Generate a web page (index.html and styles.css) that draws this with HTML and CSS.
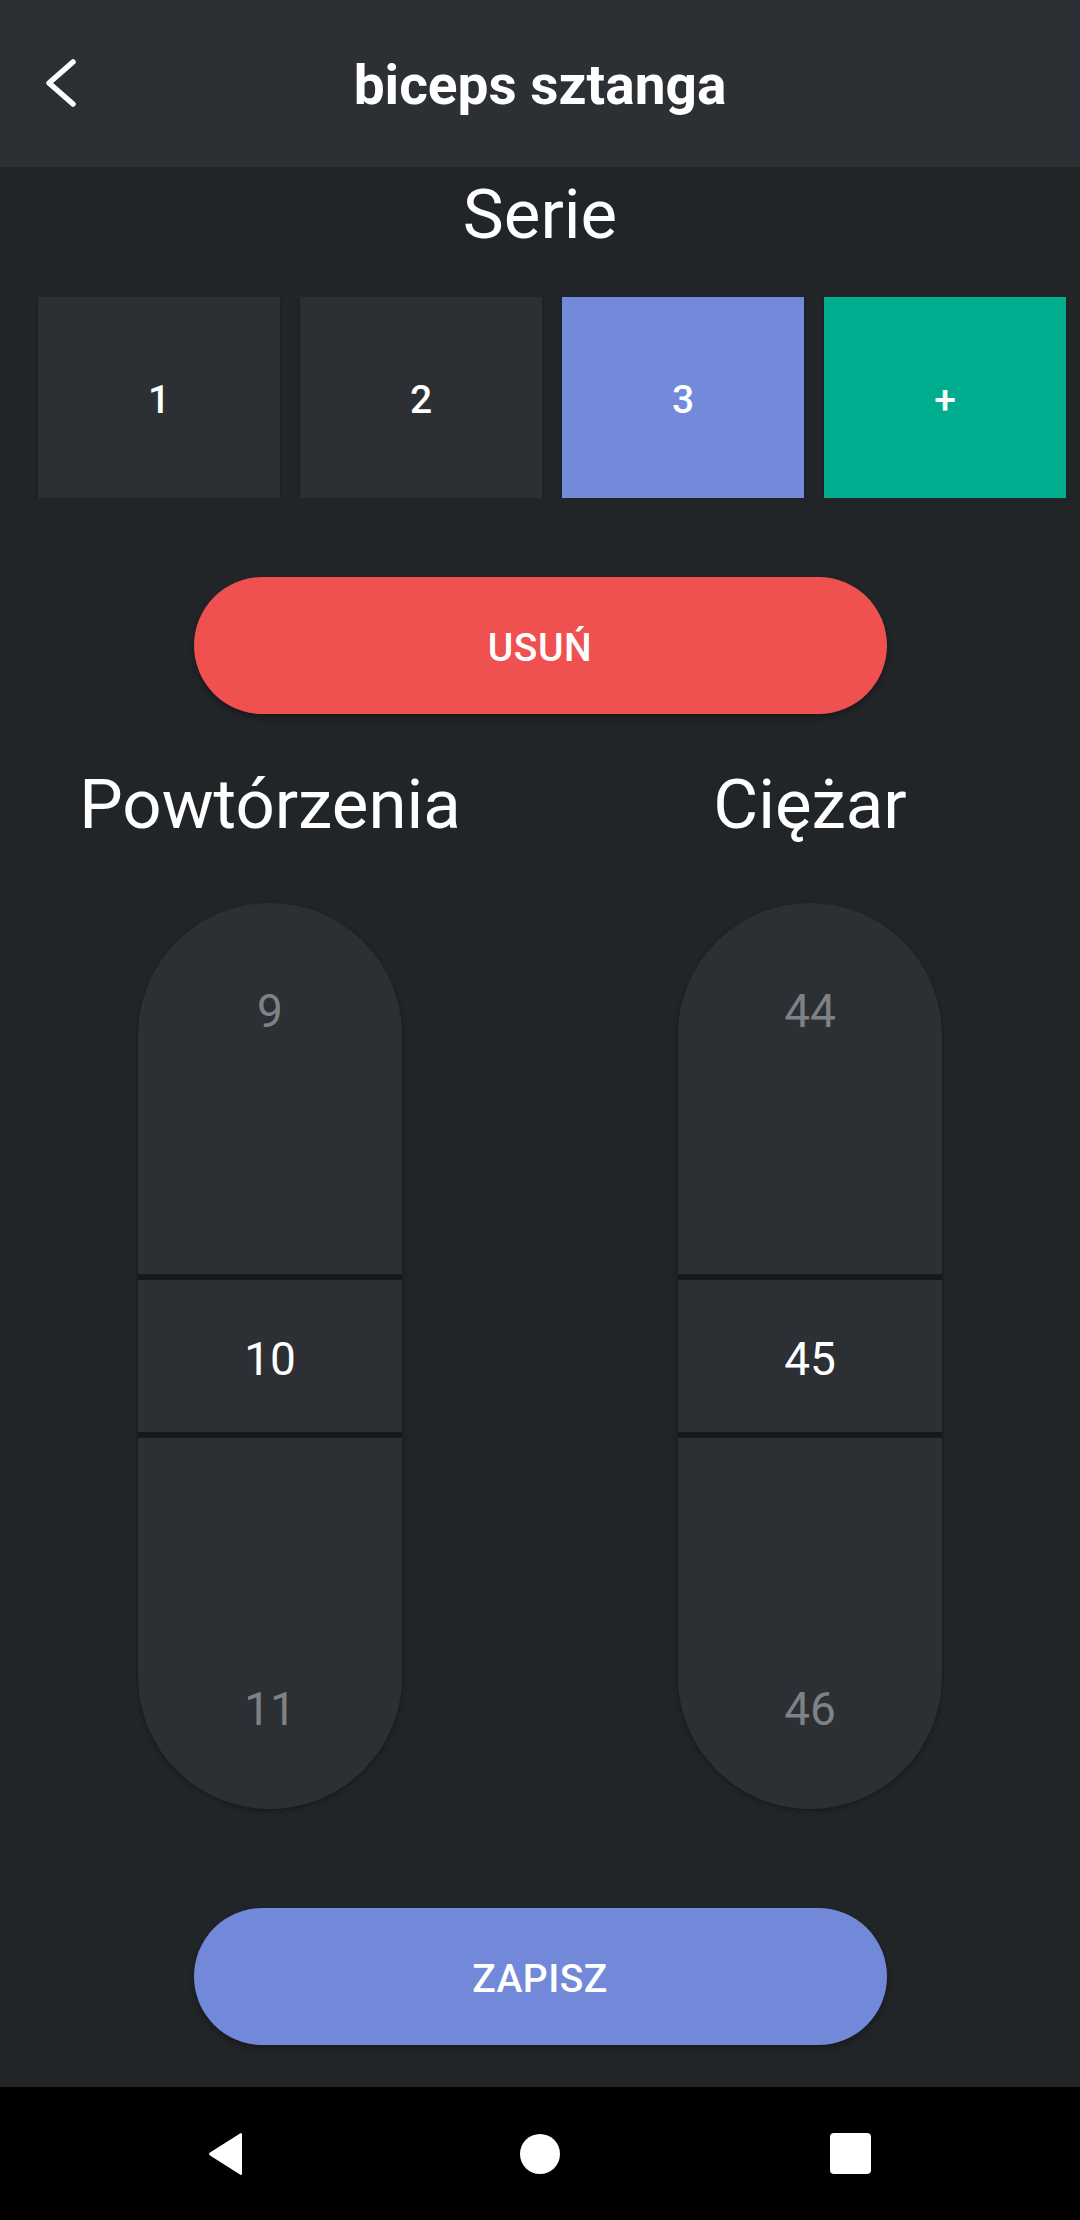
FILE: index.html
```html
<!DOCTYPE html>
<html lang="pl">
<head>
<meta charset="utf-8">
<title>biceps sztanga</title>
<link rel="stylesheet" href="styles.css">
</head>
<body>
<div class="screen">
  <header class="appbar">
    <div class="appbar-left">
      <svg class="back-icon" width="40" height="56" viewBox="0 0 40 56">
        <polyline points="28,5 4,26 28,47" fill="none" stroke="#ffffff" stroke-width="5.5" stroke-linecap="round" stroke-linejoin="round"/>
      </svg>
    </div>
    <h1 class="appbar-title">biceps sztanga</h1>
    <div class="appbar-right"></div>
  </header>

  <main class="content">
    <h2 class="section-title">Serie</h2>

    <div class="series-row">
      <div class="series-tile">1</div>
      <div class="series-tile">2</div>
      <div class="series-tile series-tile--active">3</div>
      <div class="series-tile series-tile--add">+</div>
    </div>

    <button class="pill-btn pill-btn--danger">USUŃ</button>

    <div class="pickers">
      <div class="picker-col">
        <h2 class="picker-label">Powtórzenia</h2>
        <div class="picker">
          <div class="picker-top"><span class="picker-dim">9</span></div>
          <div class="picker-divider"></div>
          <div class="picker-mid">10</div>
          <div class="picker-divider"></div>
          <div class="picker-bottom"><span class="picker-dim">11</span></div>
        </div>
      </div>
      <div class="picker-col">
        <h2 class="picker-label">Ciężar</h2>
        <div class="picker">
          <div class="picker-top"><span class="picker-dim">44</span></div>
          <div class="picker-divider"></div>
          <div class="picker-mid">45</div>
          <div class="picker-divider"></div>
          <div class="picker-bottom"><span class="picker-dim">46</span></div>
        </div>
      </div>
    </div>

    <button class="pill-btn pill-btn--primary">ZAPISZ</button>
  </main>

  <nav class="navbar">
    <svg class="nav-back" width="38" height="44" viewBox="0 0 38 44">
      <path d="M35 2.5 L35 41.5 Q35 44 33 42.5 L3 23.5 Q1 22 3 20.5 L33 1.5 Q35 0 35 2.5 Z" fill="#ffffff"/>
    </svg>
    <div class="nav-home"></div>
    <div class="nav-recent"></div>
  </nav>
</div>
</body>
</html>
```

FILE: styles.css
```css
html, body {
  margin: 0;
  padding: 0;
}

body {
  width: 1080px;
  height: 2220px;
  background: #222528;
  font-family: Roboto, "Noto Sans", "Liberation Sans", sans-serif;
  color: #ffffff;
  overflow: hidden;
}

.screen {
  display: flex;
  flex-direction: column;
  height: 2220px;
}

/* App bar */
.appbar {
  height: 167px;
  background: #2c2f34;
  display: grid;
  grid-template-columns: 1fr auto 1fr;
  align-items: center;
  flex-shrink: 0;
}

.appbar-left {
  display: flex;
  align-items: center;
  padding-left: 45px;
  padding-top: 2px;
}

.back-icon {
  display: block;
}

.appbar-title {
  margin: 0;
  padding-top: 3px;
  font-size: 55px;
  font-weight: 700;
  line-height: 64px;
  letter-spacing: 0;
}

/* Content */
.content {
  flex: 1;
  display: flex;
  flex-direction: column;
}

.section-title {
  margin: 8px 0 0;
  text-align: center;
  font-size: 69px;
  font-weight: 400;
  line-height: 80px;
}

.series-row {
  display: flex;
  gap: 20px;
  padding-left: 38px;
  margin-top: 42px;
  overflow: hidden;
}

.series-tile {
  flex: 0 0 242px;
  height: 201px;
  box-sizing: border-box;
  padding-top: 5px;
  background: #2c2f34;
  display: flex;
  align-items: center;
  justify-content: center;
  font-size: 39px;
  font-weight: 500;
  box-shadow: 0 1px 3px rgba(0, 0, 0, 0.25);
}

.series-tile--active {
  background: #7389d9;
}

.series-tile--add {
  background: #00ae8f;
}

.pill-btn {
  display: block;
  align-self: center;
  width: 693px;
  height: 137px;
  border: none;
  border-radius: 69px;
  color: #ffffff;
  font-family: Roboto, "Noto Sans", "Liberation Sans", sans-serif;
  font-size: 39px;
  font-weight: 500;
  letter-spacing: 0.5px;
  box-shadow: 0 4px 6px rgba(0, 0, 0, 0.3);
  padding: 5px 0 0;
}

.pill-btn--danger {
  background: #ef5050;
  margin-top: 79px;
}

.pill-btn--primary {
  background: #7289d9;
  margin-top: 99px;
}

/* Pickers */
.pickers {
  display: grid;
  grid-template-columns: 540px 540px;
  margin-top: 51px;
}

.picker-col {
  display: flex;
  flex-direction: column;
  align-items: center;
}

.picker-label {
  margin: 0;
  font-size: 69px;
  font-weight: 400;
  line-height: 80px;
}

.picker {
  margin-top: 58px;
  width: 264px;
  height: 906px;
  border-radius: 132px;
  background: #2c2f34;
  box-shadow: 0 2px 5px rgba(0, 0, 0, 0.35);
  display: flex;
  flex-direction: column;
  overflow: hidden;
}

.picker-top,
.picker-bottom {
  height: 371px;
  display: flex;
  flex-direction: column;
  align-items: center;
  flex-shrink: 0;
  box-sizing: border-box;
}

.picker-top {
  justify-content: flex-start;
  padding-top: 78px;
}

.picker-bottom {
  justify-content: flex-end;
  padding-bottom: 70px;
}

.picker-dim {
  font-size: 46px;
  line-height: 60px;
  color: #7f8184;
}

.picker-divider {
  height: 6px;
  background: #18191b;
  flex-shrink: 0;
}

.picker-mid {
  height: 152px;
  box-sizing: border-box;
  padding-top: 5px;
  display: flex;
  align-items: center;
  justify-content: center;
  font-size: 46px;
  line-height: 60px;
  color: #ffffff;
  flex-shrink: 0;
}

/* Navigation bar */
.navbar {
  margin-top: auto;
  height: 133px;
  background: #000000;
  display: flex;
  align-items: center;
  padding-left: 207px;
  flex-shrink: 0;
}

.nav-back {
  display: block;
}

.nav-home {
  width: 40px;
  height: 40px;
  border-radius: 50%;
  background: #ffffff;
  margin-left: 275px;
}

.nav-recent {
  width: 41px;
  height: 41px;
  border-radius: 4px;
  background: #ffffff;
  margin-left: 270px;
}
```
